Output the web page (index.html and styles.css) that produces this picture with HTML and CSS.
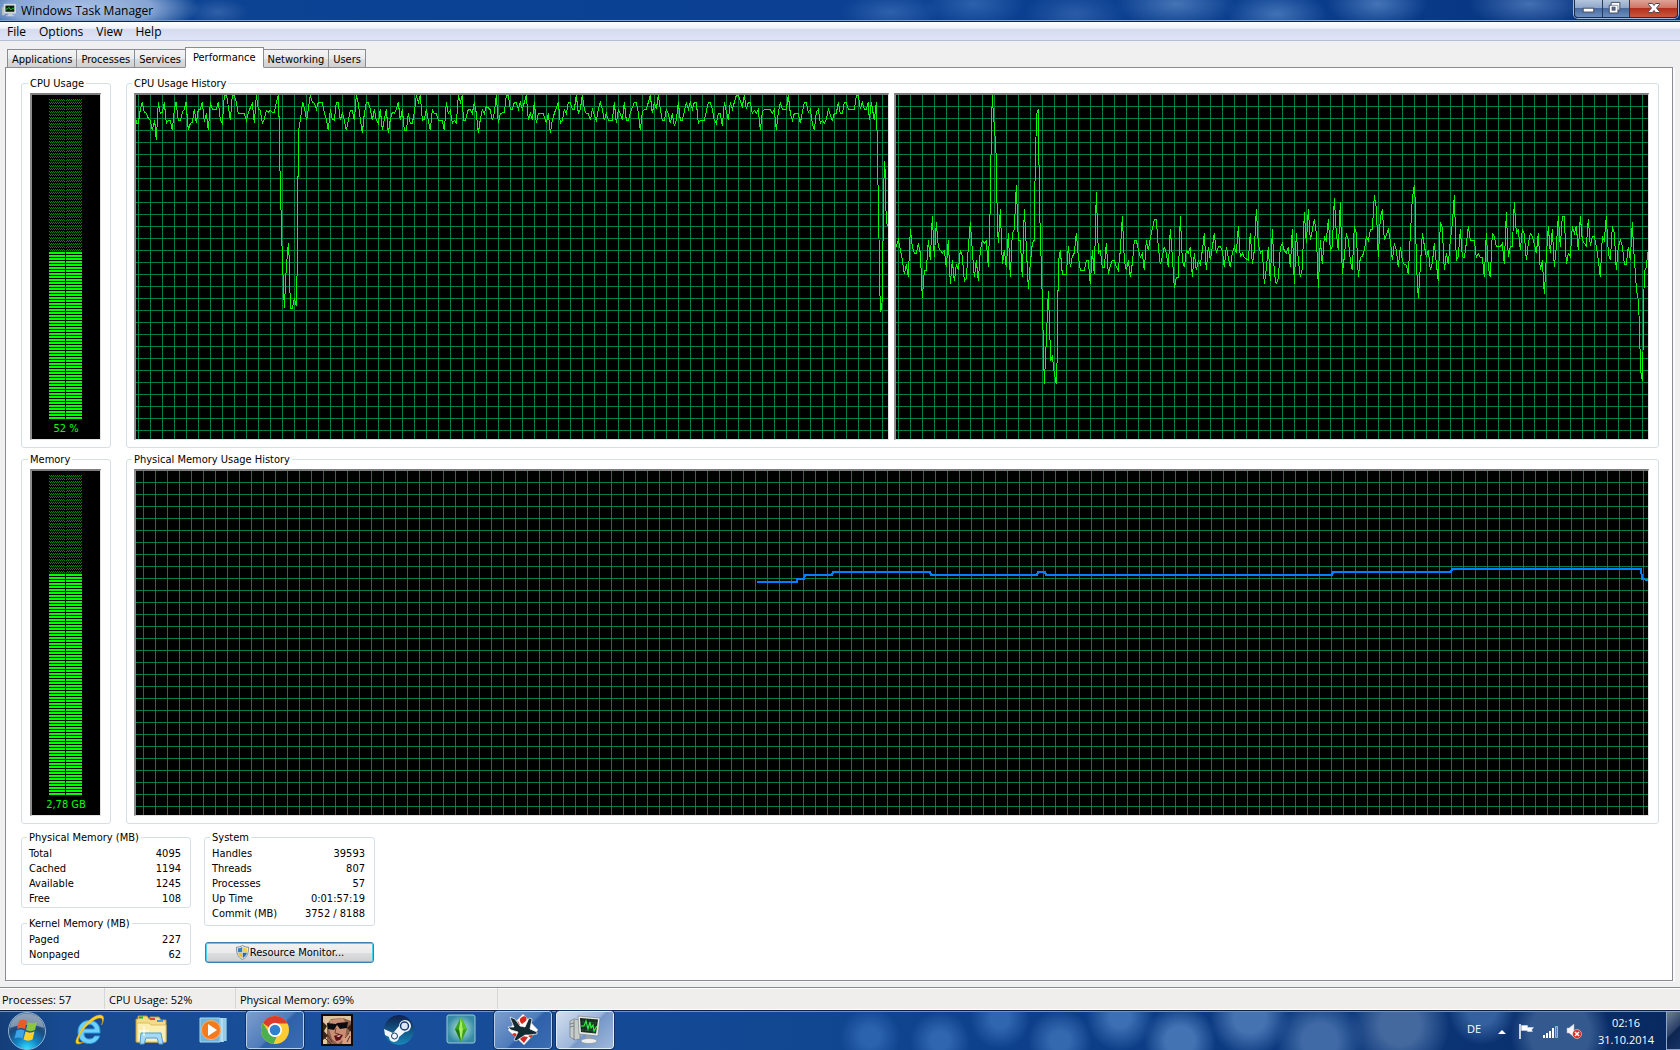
FILE: index.html
```html
<!DOCTYPE html>
<html lang="en">
<head>
<meta charset="utf-8">
<title>Windows Task Manager</title>
<link rel="stylesheet" href="styles.css">
</head>
<body>
<svg class="defs" aria-hidden="true">
  <defs>
    <pattern id="dim" width="2" height="3" patternUnits="userSpaceOnUse">
      <rect width="2" height="3" fill="#000"/>
      <rect width="1" height="1" fill="#008c00"/>
      <rect x="1" y="1" width="1" height="1" fill="#008c00"/>
    </pattern>
    <pattern id="lit" width="2" height="3" patternUnits="userSpaceOnUse">
      <rect width="2" height="3" fill="#000"/>
      <rect width="2" height="2" fill="#0f0"/>
    </pattern>
  </defs>
</svg>

<header class="titlebar">
  <svg class="app-icon" viewBox="0 0 16 16"><path d="M0 5l3-1v10H0z" fill="#b9bfb8"/><path d="M2 1h14v11H2z" fill="#d5dad9"/><path d="M4 3h10v7H4z" fill="#0a1c10"/><path d="M4 7h2l2-2 2 3 2-2h2" fill="none" stroke="#2ee142" stroke-width="1"/><path d="M7 12h5v2H7zM5 14h9v1H5z" fill="#c8cfd2"/></svg>
  <h1>Windows Task Manager</h1>
  <div class="caption">
    <button class="min" aria-label="Minimize"><svg viewBox="0 0 28 18"><rect x="8.500" y="8.500" width="11" height="4" fill="#fff" stroke="#454d63"/></svg></button>
    <button class="max" aria-label="Restore"><svg viewBox="0 0 27 18"><path d="M8.500 2.500h9v8h-2v3h-9v-8h2z" fill="#fff" stroke="#454d63"/><rect x="9.500" y="7.500" width="3" height="3" fill="#54719d" stroke="#454d63"/><path d="M8.500 5.500h7v5" fill="none" stroke="#8790a4"/></svg></button>
    <button class="close" aria-label="Close"><svg viewBox="0 0 47 18"><path d="M18.500 3.500h4l1.500 2 1.500-2h4v1l-3 3.500 3 3.500v1h-4l-1.500-2-1.500 2h-4v-1l3-3.500-3-3.500z" fill="#fff" stroke="#4f4850"/></svg></button>
  </div>
</header>

<nav class="menubar">
  <button>File</button><button>Options</button><button>View</button><button>Help</button>
</nav>

<main class="client">
  <div class="tabs" role="tablist">
    <button role="tab">Applications</button>
    <button role="tab">Processes</button>
    <button role="tab">Services</button>
    <button role="tab" class="active" aria-selected="true">Performance</button>
    <button role="tab">Networking</button>
    <button role="tab">Users</button>
  </div>
  <section class="pane">
    <div class="row">
      <fieldset class="gauge">
        <legend>CPU Usage</legend>
        <div class="meter">
          <svg class="bars"><rect width="100%" height="100%" fill="url(#dim)"/><rect y="47.800%" width="100%" height="53%" fill="url(#lit)"/><rect x="16" width="1" height="100%"/></svg>
          <span>52 %</span>
        </div>
      </fieldset>
      <fieldset class="history">
        <legend>CPU Usage History</legend>
        <div class="chart">
          <svg viewBox="0 0 2256 1032" preserveAspectRatio="none">
            <g transform="translate(-18,-45)"><polyline points="18,121 20,130 25,130 31,88 37,67 43,97 49,100 55,115 61,121 67,151 74,121 79,181 85,67 91,100 97,97 103,67 109,130 115,121 121,121 127,151 133,88 138,67 145,121 151,121 157,97 163,88 168,67 175,151 181,130 187,127 193,88 199,130 205,88 211,88 217,67 223,127 229,100 235,151 241,67 247,88 259,88 265,67 271,118 277,130 283,46 290,46 301,121 307,46 313,46 319,67 325,100 343,100 349,121 355,97 367,70 373,130 379,46 385,88 391,91 397,130 403,118 409,91 415,97 421,91 427,97 433,97 439,67 445,46 446,108 449,108 449,233 452,350 455,464 458,560 463,685 469,560 475,490 478,540 481,685 487,685 493,655 499,677 502,546 502,288 505,288 506,151 511,121 518,67 524,88 530,121 536,80 541,46 547,67 553,70 559,88 565,67 577,67 583,97 589,118 595,151 601,88 607,118 613,121 619,67 625,67 631,121 637,97 643,121 649,151 655,121 661,91 667,91 673,121 679,46 685,70 691,118 697,160 703,100 709,67 715,67 721,88 727,121 733,88 739,121 745,130 751,88 757,151 763,118 769,88 775,160 781,118 787,97 793,100 799,88 805,67 811,121 817,88 823,151 829,151 835,100 841,130 847,130 853,97 859,46 865,67 871,46 877,121 883,118 889,88 895,121 901,151 907,88 913,100 919,100 925,121 937,121 943,151 949,67 955,100 961,91 967,130 973,121 979,130 985,46 991,67 997,46 1000,121 1006,121 1015,88 1021,88 1027,100 1033,67 1039,100 1045,160 1051,118 1057,88 1063,100 1069,79 1080,88 1087,121 1093,100 1099,46 1105,130 1111,100 1123,97 1129,46 1135,46 1141,88 1147,88 1153,67 1159,67 1165,88 1171,67 1177,88 1183,67 1189,46 1195,121"/></g>
            <g transform="translate(1152,-45)"><polyline points="25,121 31,100 37,121 43,67 49,130 55,100 70,100 79,130 85,100 91,160 97,121 103,100 115,67 121,130 127,121 133,88 139,100 145,67 151,67 157,88 163,88 169,46 175,100 181,88 187,46 193,88 199,100 205,100 211,121 217,88 229,121 235,88 241,67 247,88 253,121 259,100 265,121 277,121 283,67 289,130 295,88 301,100 307,121 313,67 319,121 325,121 331,97 343,67 349,67 355,97 361,151 367,97 373,88 379,88 391,46 397,100 403,67 409,88 415,46 421,88 427,121 433,121 439,88 445,100 451,130 457,100 463,139 469,121 475,67 481,121 487,121 499,67 505,88 511,67 517,88 523,67 529,67 535,130 541,121 553,121 565,67 571,67 577,88 583,121 589,130 595,100 601,100 607,139 613,67 625,121 631,67 637,88 649,46 655,46 667,79 673,46 679,88 685,67 691,67 697,100 703,91 709,100 715,88 721,151 727,97 733,88 751,88 757,100 763,88 769,151 775,97 781,67 787,88 799,88 805,46 811,100 817,121 823,100 835,100 841,130 847,97 853,67 859,67 865,97 871,88 877,130 883,151 889,97 895,88 901,130 907,121 913,130 919,118 925,88 937,121 943,100 949,100 955,67 961,100 967,100 973,67 979,67 985,88 1003,88 1009,46 1015,46 1021,88 1027,67 1033,88 1039,88 1045,67 1048,121 1054,67 1063,121 1069,67 1070,150 1073,151 1074,315 1077,473 1079,623 1082,697 1086,670 1088,558 1091,348 1093,243 1097,292 1097,380 1101,433 1104,438"/></g>
          </svg>
        </div>
        <div class="chart">
          <svg viewBox="0 0 2256 1032" preserveAspectRatio="none">
            <g transform="translate(-18,-45)"><polyline points="18,502 25,480 31,510 37,540 43,583 49,552 55,592 61,447 67,502 73,519 79,519 85,490 91,519 97,655 103,571 109,571 115,481 121,541 127,409 133,532 139,427 145,502 151,511 157,519 163,512 169,562 175,481 181,613 187,541 193,604 199,553 205,571 211,511 217,528 223,604 229,595 235,502 241,427 247,511 253,592 259,541 265,604 271,511 277,482 283,490 289,482 295,562 301,373 304,156 307,46 310,100 316,180 319,237 322,432 325,490 331,388 337,553 343,511 349,562 355,460 361,592 367,460 373,447 379,316 385,482 391,482 397,592 403,388 409,502 415,626 421,550 427,490 433,480 436,219 441,98 445,88 448,336 451,474 455,582 458,705 463,913 469,780 475,634 478,718 482,842 487,830 493,880 499,913 502,820 502,633 505,630 506,541 511,511 517,583 529,583 535,498 541,562 547,530 553,519 559,460 565,530 571,571 583,571 589,541 595,541 601,613 607,511 613,583 619,337 625,519 631,512 637,562 643,562 649,490 655,583 661,556 667,541 673,541 679,560 685,571 691,511 697,409 703,541 709,571 715,541 721,592 727,550 733,482 739,482 751,532 757,520 763,571 769,481 775,511 781,475 793,418 799,418 805,502 811,553 817,530 823,500 829,520 835,562 841,448 847,530 853,625 859,592 865,592 871,409 877,541 883,562 889,512 895,519 901,500 907,592 913,520 919,571 925,541 931,553 937,511 943,460 949,571 955,500 961,541 967,502 973,460 979,519 985,500 991,500 997,512 1003,562 1009,500 1015,532 1021,562 1027,519 1033,500 1039,520 1045,439 1051,532 1057,519 1063,532 1075,541 1081,460 1087,553 1093,511 1099,388 1105,490 1111,519 1117,512 1123,613 1129,565 1135,500 1141,604 1147,448 1153,580 1159,613 1165,595 1171,502 1177,490 1183,512 1189,519 1195,500 1201,562"/></g>
            <g transform="translate(1152,-45)"><polyline points="31,562 37,448 43,613 49,460 55,540 61,592 67,565 73,397 79,490 85,388 91,481 97,450 103,418 109,460 115,625 121,481 127,553 133,470 139,481 145,418 151,511 157,500 163,355 169,460 175,511 181,367 187,583 193,530 199,460 205,480 211,541 217,571 223,439 229,460 235,592 241,532 247,530 253,511 259,470 265,481 271,450 277,448 283,346 289,385 295,532 301,412 307,388 313,481 325,448 331,481 337,541 343,490 349,511 355,562 361,500 367,541 373,553 379,556 385,583 391,465 397,355 401,330 403,316 406,367 409,550 415,655 421,560 427,460 439,532 445,511 451,571 457,550 463,490 469,550 475,604 481,427 487,445 493,571 499,520 505,553 511,481 517,430 523,346 529,541 535,530 541,448 547,530 553,532 559,490 565,439 571,481 583,481 589,532 595,520 601,532 607,532 613,592 619,460 625,562 631,592 637,460 643,470 649,500 661,500 667,490 673,553 679,397 685,532 691,500 697,500 703,367 709,460 715,450 721,511 727,448 733,460 739,541 745,490 751,460 757,470 763,492 769,520 775,460 781,571 787,541 793,643 799,530 805,439 811,520 817,448 823,562 829,500 835,409 841,500 847,409 853,409 859,553 865,520 871,530 877,439 883,460 889,439 895,511 901,409 907,481 913,490 919,498 925,418 931,498 937,470 943,470 949,500 955,541 961,592 967,470 973,481 979,409 985,520 991,541 997,439 1003,460 1009,571 1015,500 1021,481 1027,498 1033,553 1039,553 1045,500 1051,541 1057,427 1060,490 1066,580 1070,635 1074,655 1077,705 1079,782 1083,880 1087,902 1089,818 1091,655 1094,571 1099,562 1103,517"/></g>
          </svg>
        </div>
      </fieldset>
    </div>

    <div class="row">
      <fieldset class="gauge">
        <legend>Memory</legend>
        <div class="meter">
          <svg class="bars"><rect width="100%" height="100%" fill="url(#dim)"/><rect y="30.800%" width="100%" height="70%" fill="url(#lit)"/><rect x="16" width="1" height="100%"/></svg>
          <span>2,78 GB</span>
        </div>
      </fieldset>
      <fieldset class="history">
        <legend>Physical Memory Usage History</legend>
        <div class="chart memory">
          <svg viewBox="0 0 1512 344" preserveAspectRatio="none">
            <polyline points="621,111 661,111 661,108 668,108 669,104 696,104 697,101 794,101 795,104 901,104 902,101 909,101 910,104 1196,104 1197,101 1315,101 1316,98 1505,98 1506,108 1512,109"/>
          </svg>
        </div>
      </fieldset>
    </div>

    <div class="details">
      <div class="column">
        <fieldset>
          <legend>Physical Memory (MB)</legend>
          <table>
            <tr><th>Total</th><td>4095</td></tr>
            <tr><th>Cached</th><td>1194</td></tr>
            <tr><th>Available</th><td>1245</td></tr>
            <tr><th>Free</th><td>108</td></tr>
          </table>
        </fieldset>
        <fieldset>
          <legend>Kernel Memory (MB)</legend>
          <table>
            <tr><th>Paged</th><td>227</td></tr>
            <tr><th>Nonpaged</th><td>62</td></tr>
          </table>
        </fieldset>
      </div>
      <div class="column system">
        <fieldset>
          <legend>System</legend>
          <table>
            <tr><th>Handles</th><td>39593</td></tr>
            <tr><th>Threads</th><td>807</td></tr>
            <tr><th>Processes</th><td>57</td></tr>
            <tr><th>Up Time</th><td>0:01:57:19</td></tr>
            <tr><th>Commit (MB)</th><td>3752 / 8188</td></tr>
          </table>
        </fieldset>
        <button class="resource">
          <svg viewBox="0 0 16 16"><path d="M8 .5c2 1.300 4 1.800 6.500 1.800 0 6-1 10-6.500 13.200C2.500 12.300 1.500 8.300 1.500 2.300 4 2.300 6 1.800 8 .5z" fill="#e9eef2" stroke="#7b8791"/><path d="M7.700 2.200v5.600H3.200C3 6.300 3 5 3 3.600c1.800 0 3.200-.5 4.700-1.400z" fill="#2f7fd3"/><path d="M8.300 2.200C9.800 3.100 11.200 3.600 13 3.600c0 1.400 0 2.700-.2 4.200H8.300z" fill="#f7cf3a"/><path d="M3.300 8.300h4.400v5.600C5 12.300 3.800 10.600 3.300 8.300z" fill="#f4bf24"/><path d="M12.700 8.300H8.300v5.600c2.700-1.600 3.900-3.300 4.400-5.600z" fill="#2467bd"/></svg>Resource Monitor...</button>
      </div>
    </div>
  </section>
</main>

<footer class="status">
  <span class="s1">Processes: 57</span><span class="s2">CPU Usage: 52%</span><span class="s3">Physical Memory: 69%</span>
</footer>

<nav class="taskbar">
  <button class="start" aria-label="Start">
    <svg viewBox="0 0 40 40">
      <defs><radialGradient id="orb" cx=".5" cy="1" r=".9"><stop offset="0" stop-color="#35e5ff"/><stop offset=".35" stop-color="#1286c6"/><stop offset=".7" stop-color="#1b4a7c"/><stop offset="1" stop-color="#4a6788"/></radialGradient></defs>
      <circle cx="20" cy="20" r="18.500" fill="url(#orb)" stroke="#8db4d6"/>
      <path d="M3 17C4 8 11 2.500 20 2.500S36 8 37 17c-9-4-25-4-34 0z" fill="#fff" opacity=".38"/>
      <path d="M12 10c3-2 5-1.500 8 0l-2 8c-3-1.500-5-1.500-8 0z" fill="#ee5a24"/>
      <path d="M21 11c3 1.500 6 1.500 9 0l-2 8c-3 1.500-6 1.500-9 0z" fill="#8cc63f"/>
      <path d="M9.500 19.500c3-1.500 5-1.500 8 0l-2 8c-3-1.500-5-1.500-8 0z" fill="#3fa3e8"/>
      <path d="M18.500 20.500c3 1.500 6 1.500 9 0l-2 8c-3 1.500-6 1.500-9 0z" fill="#ffd02e"/>
    </svg>
  </button>
  <button class="app" aria-label="Internet Explorer">
    <svg viewBox="0 0 32 32"><path d="M27 19H11c0 4 2 6 5.500 6 2.500 0 4-1 5-3h5.200c-1.700 5-5.500 7.500-10.500 7.500C9.500 29.500 5 25 5 18S9.500 6.500 16.500 6.500C23.500 6.500 27.500 11.500 27 19zM11 15h10.500c-.3-3-2-4.500-5-4.500S11.500 12 11 15z" fill="#6fd0fa" stroke="#2b9be4"/><path d="M6 20C0 30 3 32 11 28 5 30 3.500 27 8 19 13 11 22 4 27 4c3 0 3 3 1.500 7C32 5 31 1 27 1 20 1 10 11 6 20z" fill="#ffd22b" stroke="#e3a50e" stroke-width=".5"/></svg>
  </button>
  <button class="app" aria-label="Windows Explorer">
    <svg viewBox="0 0 32 32"><path d="M1 5h2V2h9l2 3h1V3h9l2 3h5v22H1z" fill="#f3dc86" stroke="#b9953a"/><path d="M4 2.500h4v2H4z" fill="#26a33a"/><path d="M15 4h5v2h-5z" fill="#d8482d"/><path d="M22 6h6v2h-6z" fill="#3b9be0"/><path d="M2 9h12l2 2h15v17H2z" fill="#fbeeb1" stroke="#d9bd69"/><path d="M5 30l1-11h20l2 11h-4l-2-6H11l-2 6z" fill="#a5d9f5" stroke="#549fcf"/><path d="M9 12v10M4 17h10" stroke="#fff"/></svg>
  </button>
  <button class="app" aria-label="Media Player">
    <svg viewBox="0 0 32 32"><path d="M12 4h18v23H12z" fill="#5ca6d1"/><path d="M9 4h18v24H9z" fill="#91cbe9"/><path d="M25 4v24M28 4v23" stroke="#d6effb"/><path d="M3 4h20v24H3z" fill="#74b5dd" stroke="#a8d8f0"/><circle cx="14" cy="16" r="9.500" fill="#f47a20" stroke="#fcb06a"/><path d="M11 10l9 6-9 6z" fill="#fff"/></svg>
  </button>
  <button class="app open" aria-label="Chrome">
    <svg viewBox="0 0 32 32"><circle cx="16" cy="16" r="14" fill="#fc3"/><path d="M3.900 9A14 14 0 0 1 28.500 9.500H16a6.500 6.500 0 0 0-6 4z" fill="#dd3b2e"/><path d="M3.900 9l6.400 10.500A6.500 6.500 0 0 0 18 22l-3.500 8A14 14 0 0 1 3.900 9z" fill="#4caf50"/><circle cx="16" cy="16" r="7" fill="#fff"/><circle cx="16" cy="16" r="5.300" fill="#2f80d0"/></svg>
  </button>
  <button class="app" aria-label="GTA San Andreas">
    <svg viewBox="0 0 32 32"><path d="M0 0h32v32H0z" fill="#120b08"/><path d="M2 2h28v28H2z" fill="#8a5e49"/><path d="M2 2h28v5L22 4 10 5 6 10v20H2z" fill="#dbc7a0"/><path d="M2 8l4 4-3 5 4 5-5 4zM26 14l4 4-3 12h3V10z" fill="#3d2117"/><path d="M9 6l13-2 4 8-2 12-7 6-6-5-3-10z" fill="#c98f75"/><path d="M6 9l9 1 1-1 11-1-1 6-7 1-3-4-3 5-6-1z" fill="#0c0b10"/><path d="M15 14l-1 5 4 1" fill="none" stroke="#75402f"/><path d="M13 22l5-2 4 1-3 5-4 1z" fill="#5e1016"/><path d="M15 22l5-1-2 2z" fill="#f1e5dc"/><path d="M22 24l8-7v13h-9z" fill="#d7a082"/><path d="M24 24l4-5M26 28l3-6M4 24l6 6M6 20l5 8" stroke="#5b3022"/></svg>
  </button>
  <button class="app" aria-label="Steam">
    <svg viewBox="0 0 32 32"><defs><linearGradient id="steam" x2="0" y2="1"><stop offset="0" stop-color="#10204c"/><stop offset="1" stop-color="#1787ba"/></linearGradient></defs><circle cx="16" cy="16" r="15" fill="url(#steam)"/><path d="M1 15l9 4 1-1 5-6a6 6 0 1 1 6 6l-6 5a5 5 0 0 1-10 0l-4-2z" fill="#f2f6fa"/><circle cx="21.500" cy="12" r="4" fill="#dce8f1" stroke="#17386a" stroke-width="1.500"/><circle cx="11.500" cy="22" r="3" fill="none" stroke="#17386a" stroke-width="1"/></svg>
  </button>
  <button class="app" aria-label="The Sims 3">
    <svg viewBox="0 0 32 32"><defs><radialGradient id="sims"><stop offset="0" stop-color="#b7ecd9"/><stop offset="1" stop-color="#378aa6"/></radialGradient></defs><rect x="2" y="1" width="28" height="28" rx="2" fill="url(#sims)" stroke="#9cc8d8"/><path d="M16 3l6 12-6 13-6-13z" fill="#3a9f1e"/><path d="M16 3l2 12-2 13-2-13z" fill="#a9ec5c"/><path d="M16 3l2 13 4-1z" fill="#56c42b"/><path d="M10 15l4 1 2 12z" fill="#1e7513"/></svg>
  </button>
  <button class="app open" aria-label="Game">
    <svg viewBox="0 0 32 32"><path d="M16 0l15 16-14 15L1 16z" fill="#fff" stroke="#bbb" stroke-width=".5"/><path d="M15 3c2-2 6 0 4 4l-4 3c-3-3-3-5 0-7zM8 10l3-3 2 4-2 2zM8 19l3 2-2 3-4-4zM24 20l4-2-4 6-3-2zM15 22l6 1-4 6-4-4z" fill="#d3281d"/><path d="M3 3l5 2 5 7 5 1 4-9 3 1-2 10 7 3v2l-8 1-4 0-9 6-2-1 4-8-7-2-3-3 6 0-3-7z" fill="#142a33" stroke="#fff" stroke-width=".7"/></svg>
  </button>
  <button class="app open current" aria-label="Task Manager">
    <svg viewBox="0 0 32 32"><path d="M1 7l4-2 6 1v19l-5 1-5-3z" fill="#c7ccca" stroke="#71787c" stroke-width=".7"/><path d="M5 6v20M1 10l4-1M1 13l4-1" stroke="#5f6669" stroke-width=".7"/><path d="M9 2l22 2-2 18-19-2z" fill="#e6e9ea" stroke="#7d868a" stroke-width=".7"/><path d="M11 4l18 1.500-2 14-15-1.500z" fill="#14271a"/><path d="M14 5v13M17 5v13M20 5v14M23 5v14M26 5v14M12 8l16 1M12 12l16 1M12 16l15 1" stroke="#2c6a3a" stroke-width=".5"/><path d="M12 12l3 0 2-5 2 8 2-7 1 6 2-3 1 6 3-5" fill="none" stroke="#2cf046" stroke-width="1.200"/><path d="M17 21l5 1v4h-5z" fill="#9ba2a5"/><ellipse cx="20" cy="27" rx="8" ry="2.500" fill="#eceeee" stroke="#8e9699" stroke-width=".7"/></svg>
  </button>

  <div class="tray">
    <span class="lang">DE</span>
    <button aria-label="Show hidden icons"><svg viewBox="0 0 16 16"><path d="M4 11l4-4 4 4z" fill="#fff"/></svg></button>
    <button aria-label="Action Center"><svg viewBox="0 0 16 16"><path d="M2 1v15" stroke="#fff" stroke-width="1.500"/><path d="M3.500 2.500h6v2h6l-2 2.500 1 1.500h-5v-1h-6z" fill="#fff" stroke="#dfe9f5" stroke-width=".5"/></svg></button>
    <button aria-label="Network"><svg viewBox="0 0 16 16"><path d="M1 12h2v3H1zM4 10h2v5H4zM7 8h2v7H7zM10 5h2v10h-2z" fill="#fff"/><path d="M13.500 3.500h2v11h-2z" fill="#5c7ca8" stroke="#9fb5d2"/></svg></button>
    <button aria-label="Volume"><svg viewBox="0 0 16 16"><path d="M1 5h2l5-4v13l-5-4H1z" fill="#f2f4f6" stroke="#aab4c0" stroke-width=".5"/><circle cx="11" cy="11" r="4.500" fill="#dd2c22" stroke="#fff" stroke-width=".5"/><path d="M9 9l4 4M13 9l-4 4" stroke="#fff" stroke-width="1.500"/></svg></button>
    <time><span>02:16</span><span>31.10.2014</span></time>
    <button class="peek" aria-label="Show desktop"></button>
  </div>
</nav>
</body>
</html>
```
FILE: styles.css
```css
* { box-sizing: border-box; }

body {
  margin: 0;
  min-height: 100vh;
  display: flex;
  flex-direction: column;
  background: #f0f0f0;
  color: #000;
  font: 11px/14px "DejaVu Sans Condensed", "DejaVu Sans", sans-serif;
}

button {
  margin: 0;
  padding: 0;
  border: 0;
  background: none;
  color: inherit;
  font: inherit;
}

svg { display: block; }
.defs { position: absolute; width: 0; height: 0; }

/* title bar */
.titlebar {
  height: 22px;
  display: flex;
  align-items: flex-start;
  gap: 5px;
  padding-left: 2px;
  border-bottom: 1px solid #17253f;
  box-shadow: inset 0 -1px #7da3cf;
  background:
    radial-gradient(ellipse 120px 30px at 80px 8px, #a9c0e4 0, #86a5d4 60%, transparent 100%),
    radial-gradient(ellipse 30px 14px at 218px 12px, #2f60a8, transparent),
    radial-gradient(ellipse 50px 20px at 53% 12px, #2d61ad, transparent),
    radial-gradient(ellipse 50px 24px at 58% 4px, #2c61ad, transparent),
    radial-gradient(ellipse 50px 24px at 64% 14px, #2a5ca8, transparent),
    radial-gradient(ellipse 60px 24px at 70% 4px, #4674b6, transparent),
    radial-gradient(ellipse 50px 24px at 76% 14px, #4172b6, transparent),
    radial-gradient(ellipse 50px 24px at 82% 4px, #4574b7, transparent),
    radial-gradient(ellipse 60px 24px at 91% 4px, #4370b3, transparent),
    linear-gradient(90deg, #0d4493, #0b4092 50%, #0a3f8f 75%, #06307a);
}

.app-icon { width: 14px; height: 14px; margin-top: 3px; }

.titlebar h1 {
  flex: 1;
  margin: 0;
  font: 12px/22px "Open Sans", "Noto Sans", sans-serif;
}

.caption {
  display: flex;
  height: 18px;
  margin-right: 2px;
  border: 1px solid #1d2c4c;
  border-top: 0;
  border-radius: 0 0 4px 4px;
  box-shadow: 0 0 0 1px #9fb7d8;
  overflow: hidden;
}
.caption button {
  background: linear-gradient(#b5c6dd 0, #8ea7ca 45%, #4a6b9f 50%, #6c8fc0 100%);
  border-right: 1px solid #27395c;
}
.caption .min { width: 28px; }
.caption .max { width: 27px; }
.caption .close {
  width: 47px;
  border-right: 0;
  background: linear-gradient(#dfa395 0, #cf7766 45%, #b2301b 50%, #c9573f 100%);
}

/* menu */
.menubar {
  height: 19px;
  display: flex;
  padding-left: 7px;
  gap: 13px;
  border-bottom: 1px solid #b3bfd9;
  background: linear-gradient(#fff 0, #eef1f8 35%, #d5dcef 40%, #dfe5f7 100%);
  font: 12px/20px "Open Sans", "Noto Sans", sans-serif;
}
.menubar button { height: 20px; }

/* tab control */
.client {
  flex: 1;
  display: flex;
  flex-direction: column;
  padding: 6px 7px 6px 5px;
}

.tabs {
  display: flex;
  align-items: flex-end;
  height: 21px;
  padding-left: 2px;
  margin-bottom: -1px;
}
.tabs button {
  height: 19px;
  padding: 2px 4px 0;
  border: 1px solid #898c95;
  margin-right: -1px;
  background: linear-gradient(#f4f4f4 0, #ebebeb 50%, #dcdcdc 55%, #d1d1d1 100%);
}
.tabs .active {
  position: relative;
  height: 21px;
  padding: 0 7px;
  border-bottom-color: #fff;
  background: #fff;
}

.pane {
  flex: 1;
  display: flex;
  flex-direction: column;
  padding: 8px 13px 15px 15px;
  border: 1px solid #898c95;
  background: #fff;
  box-shadow: 2px 1px #fafafa;
}

.row {
  flex: 1;
  display: flex;
  gap: 15px;
  margin-bottom: 4px;
}
.row + .row { margin-bottom: 6px; }

fieldset {
  min-width: 0;
  margin: 0;
  padding: 0;
  border: 1px solid #d5dfe5;
  border-radius: 3px;
}
legend {
  height: 14px;
  margin-left: -2px;
  padding: 0 2px;
  line-height: 16px;
}

.gauge {
  display: flex;
  width: 90px;
  padding: 3px 9px 7px 8px;
}
.history {
  flex: 1;
  display: flex;
  gap: 5px;
  padding: 3px 9px 7px 7px;
}

.meter, .chart {
  flex: 1;
  border: 1px solid #e3e3e3;
  border-top: 2px solid #7d7d7d;
  border-left: 2px solid #8d8d8d;
  background-color: #000;
}

.meter {
  display: flex;
  flex-direction: column;
  align-items: center;
  padding-top: 4px;
  color: #0f0;
  line-height: 20px;
}
.bars {
  flex: 1;
  align-self: flex-start;
  width: 33px;
  min-height: 0;
  margin-left: 17px;
  shape-rendering: crispEdges;
}

.chart {
  display: flex;
  min-height: 200px;
  background-image:
    linear-gradient(90deg, #008040 1px, transparent 1px),
    linear-gradient(#008040 1px, transparent 1px);
  background-size: 12px 12px;
  background-position: 2px 0, 0 11px;
}
.chart.memory { background-position: 7px 0, 0 11px; }
.chart svg {
  flex: 1;
  width: 0;
  height: auto;
  min-width: 0;
}
.chart polyline {
  fill: none;
  stroke: #0f0;
  stroke-width: 1px;
  vector-effect: non-scaling-stroke;
  shape-rendering: crispEdges;
}
.chart.memory polyline { stroke: #0080ff; stroke-width: 2px; }

/* numeric details */
.details { display: flex; gap: 13px; }
.column { width: 170px; display: flex; flex-direction: column; gap: 8px; }
.column fieldset { padding: 2px 9px 1px 7px; }
.column fieldset + fieldset { padding-bottom: 2px; }
.column.system { width: 171px; gap: 16px; }
.column.system fieldset { padding-bottom: 4px; }

table { width: 100%; border-collapse: collapse; line-height: 15px; }
th, td { padding: 0; font-weight: normal; text-align: left; }
td { text-align: right; }

.resource {
  display: flex;
  align-items: center;
  justify-content: center;
  height: 21px;
  margin: 0 1px;
  border: 1px solid #3c7fb1;
  border-radius: 3px;
  box-shadow: inset 0 0 0 1px #48d0f7;
  background: linear-gradient(#f2f2f2 0, #ebebeb 50%, #dbdfe0 52%, #cfcfcf 100%);
}
.resource svg { width: 15px; height: 15px; }

/* status bar */
.status {
  display: flex;
  height: 23px;
  border-top: 1px solid #898c95;
  border-bottom: 1px solid #fff;
  box-shadow: inset 0 1px #fff;
  background: #f0eeed;
  font: 11px/24px "Open Sans", "Noto Sans", sans-serif;
}
.status span { border-right: 1px solid #d7d7d7; }
.s1 { width: 105px; padding-left: 2px; }
.s2 { width: 131px; padding-left: 4px; }
.s3 { width: 262px; padding-left: 4px; }

/* taskbar */
.taskbar {
  height: 40px;
  display: flex;
  align-items: stretch;
  gap: 4px;
  padding-left: 7px;
  border-top: 1px solid #0b2048;
  box-shadow: inset 0 1px #6e94c6;
  color: #fff;
  background:
    radial-gradient(circle 50px at 1560px 22px, #34598f 60%, transparent 100%),
    radial-gradient(circle 34px at 1482px 0, #34609f 40%, transparent 100%),
    radial-gradient(circle 50px at 1400px 14px, #44699f 40%, transparent 100%),
    radial-gradient(circle 44px at 1320px 30px, #3f6aa6 40%, transparent 100%),
    radial-gradient(circle 40px at 1250px 6px, #4573b1 40%, transparent 100%),
    radial-gradient(circle 36px at 1180px 30px, #4373b3 40%, transparent 100%),
    radial-gradient(circle 34px at 1120px 6px, #3c6fb3 30%, transparent 100%),
    radial-gradient(circle 32px at 1060px 30px, #3469b0 30%, transparent 100%),
    radial-gradient(circle 30px at 1000px 8px, #3065af 30%, transparent 100%),
    radial-gradient(circle 30px at 940px 30px, #3065af 30%, transparent 100%),
    radial-gradient(circle 30px at 870px 26px, #2c63af 30%, transparent 100%),
    linear-gradient(90deg, #143e78 0, #174a90 60px, #194f9c 20%, #124892 45%, #0c3e88 65%, #0b3577 85%, #08295f 100%);
}
.taskbar .start { width: 40px; margin-right: 9px; }
.taskbar .app {
  width: 58px;
  display: flex;
  align-items: center;
  justify-content: center;
  margin-bottom: 1px;
}
.app svg { width: 32px; height: 32px; }
.app.open {
  border: 1px solid #b7cdea;
  border-radius: 3px;
  outline: 1px solid #12305f;
  background: linear-gradient(135deg, #7d9ecf 0, #4f7cba 50%, #2e61a9 55%, #3a6db3 100%);
}
.app.open.current {
  border-color: #e4edf8;
  background: linear-gradient(135deg, #d3deee 0, #9db6d9 50%, #7597c9 55%, #a1b9da 100%);
}

.tray {
  display: flex;
  align-items: center;
  margin-left: auto;
  font: 11px/17px "Open Sans", "Noto Sans", sans-serif;
}
.tray button { width: 24px; }
.tray button svg { width: 16px; height: 16px; margin: 0 auto; }
.lang { padding: 0 9px 4px 0; }
.tray time {
  width: 80px;
  display: flex;
  flex-direction: column;
  align-items: center;
}
.tray .peek {
  align-self: stretch;
  width: 14px;
  border: 1px solid #8ea5c8;
  border-right: 0;
  background: linear-gradient(135deg, #6f8096 0, #2a4067 50%, #0d2550 55%, #173464 100%);
}
```
